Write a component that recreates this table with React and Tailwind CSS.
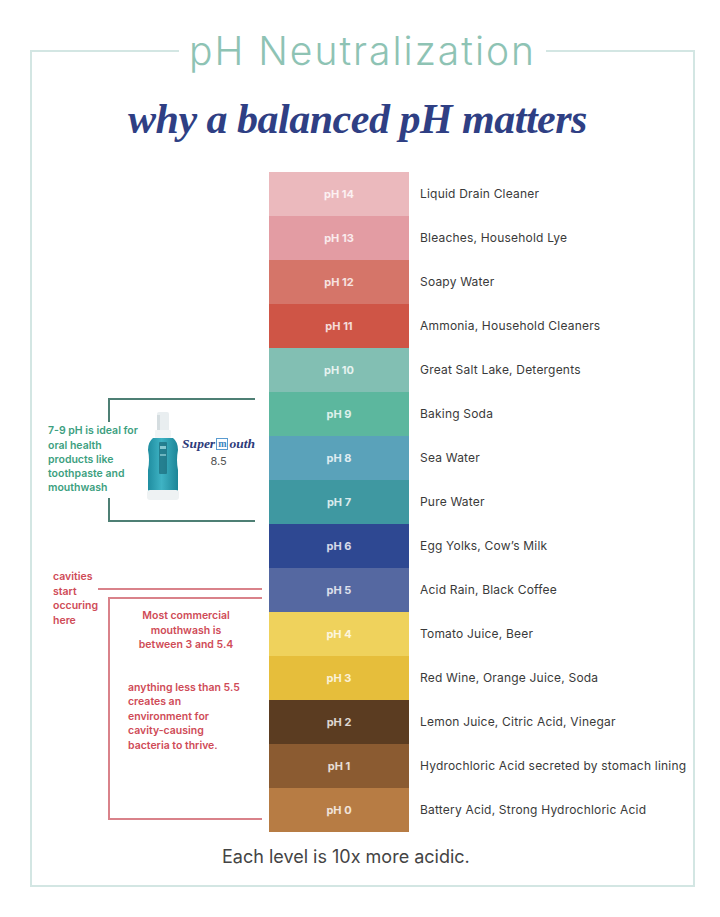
import React from 'react';

const levels = [
  { ph: 14, bg: 'bg-[#ebb9bd]', label: 'Liquid Drain Cleaner' },
  { ph: 13, bg: 'bg-[#e39ca3]', label: 'Bleaches, Household Lye' },
  { ph: 12, bg: 'bg-[#d57569]', label: 'Soapy Water' },
  { ph: 11, bg: 'bg-[#cf5546]', label: 'Ammonia, Household Cleaners' },
  { ph: 10, bg: 'bg-[#82bfb3]', label: 'Great Salt Lake, Detergents' },
  { ph: 9, bg: 'bg-[#5cb79e]', label: 'Baking Soda' },
  { ph: 8, bg: 'bg-[#5aa2ba]', label: 'Sea Water' },
  { ph: 7, bg: 'bg-[#3f98a1]', label: 'Pure Water' },
  { ph: 6, bg: 'bg-[#2e4892]', label: 'Egg Yolks, Cow’s Milk' },
  { ph: 5, bg: 'bg-[#5568a1]', label: 'Acid Rain, Black Coffee' },
  { ph: 4, bg: 'bg-[#efd25c]', label: 'Tomato Juice, Beer' },
  { ph: 3, bg: 'bg-[#e6be3b]', label: 'Red Wine, Orange Juice, Soda' },
  { ph: 2, bg: 'bg-[#5b3c21]', label: 'Lemon Juice, Citric Acid, Vinegar' },
  { ph: 1, bg: 'bg-[#8b5b31]', label: 'Hydrochloric Acid secreted by stomach lining' },
  { ph: 0, bg: 'bg-[#b77c44]', label: 'Battery Acid, Strong Hydrochloric Acid' },
];

const Bottle = () => (
  <svg width="36" height="88" viewBox="0 0 36 88" className="shrink-0">
    <defs>
      <linearGradient id="body" x1="0" x2="1" y1="0" y2="0">
        <stop offset="0" stopColor="#1f8da0" />
        <stop offset="0.45" stopColor="#3fb3c4" />
        <stop offset="1" stopColor="#1c8597" />
      </linearGradient>
    </defs>
    <rect x="12" y="0" width="12" height="20" rx="2" fill="#e9eef0" />
    <rect x="12" y="3" width="3" height="16" fill="#d5dde0" />
    <rect x="10" y="18" width="16" height="8" rx="1" fill="#f2f5f6" />
    <path d="M8 26 Q3 30 3 38 Q5 48 3 58 L3 78 Q3 82 7 82 L29 82 Q33 82 33 78 L33 58 Q31 48 33 38 Q33 30 28 26 Z" fill="url(#body)" />
    <rect x="14" y="30" width="8" height="32" rx="1" fill="#1b6b7a" opacity="0.7" />
    <rect x="15" y="34" width="6" height="3" fill="#9fd9e0" opacity="0.8" />
    <rect x="15" y="42" width="6" height="2" fill="#9fd9e0" opacity="0.6" />
    <rect x="2" y="78" width="32" height="10" rx="3" fill="#eef2f3" />
  </svg>
);

const App = () => {
  return (
    <div className="w-[720px] h-[917px] bg-white overflow-hidden font-['Inter',sans-serif]">
      <fieldset className="ml-[30px] mr-[25px] mt-[31px] border-2 border-[#d3e6e3] pb-[16px]">
        <legend className="mx-auto px-[10px] text-[39px] leading-none font-light text-[#8ec3b4] tracking-[2px]">
          pH Neutralization
        </legend>

        <h2 className="mt-[28px] text-center text-[42px] leading-none italic font-bold text-[#2f3f84] font-['Liberation_Serif',serif] tracking-[-0.5px] pr-[10px]">
          why a balanced pH matters
        </h2>

        <div className="mt-[32px] flex">
          {/* left annotations */}
          <div className="w-[237px] shrink-0">
            {/* ideal range bracket */}
            <div className="mt-[226px] ml-[76px] mr-[14px] h-[124px] border-y-2 border-[#4e7f74] flex flex-col justify-between">
              <div className="w-[2px] h-[22px] bg-[#4e7f74]" />
              <div className="h-[76px] -ml-[60px] flex items-center">
                <p className="w-[104px] text-[10.5px] leading-[14.25px] font-semibold text-[#3d9f7f] whitespace-nowrap">
                  7-9 pH is ideal for
                  <br />
                  oral health
                  <br />
                  products like
                  <br />
                  toothpaste and
                  <br />
                  mouthwash
                </p>
                <div className="ml-[5px] mb-[8px]">
                  <Bottle />
                </div>
                <div className="ml-[1px] mb-[16px] flex flex-col items-center">
                  <span className="font-['Liberation_Serif',serif] italic font-bold text-[13.5px] leading-none text-[#2d3a7a] whitespace-nowrap">
                    Super
                    <span className="inline-block not-italic border border-[#5a9bd0] text-[#3d86c0] text-[10px] leading-[10px] px-[1px] mx-[1px] align-[1px]">m</span>
                    outh
                  </span>
                  <span className="mt-[6px] text-[11px] leading-none text-[#555]">8.5</span>
                </div>
              </div>
              <div className="w-[2px] h-[22px] bg-[#4e7f74]" />
            </div>

            {/* cavity zone */}
            <div className="mt-[48px] flex">
              <p className="ml-[21px] w-[45px] text-[10.5px] leading-[14.5px] font-semibold text-[#cf4b57]">
                cavities start occuring here
              </p>
              <div className="flex-1 mr-[7px]">
                <div className="mt-[18px] h-[2px] bg-[#d9828a]" />
                <div className="mt-[7px] ml-[10px] h-[223px] border-y-2 border-l-2 border-[#d9828a]">
                  <p className="pt-[10px] text-center text-[10.5px] leading-[14.5px] font-semibold text-[#cf4b57]">
                    Most commercial
                    <br />
                    mouthwash is
                    <br />
                    between 3 and 5.4
                  </p>
                  <p className="mt-[28px] pl-[18px] text-[10.5px] leading-[14.5px] font-semibold text-[#cf4b57] whitespace-nowrap">
                    anything less than 5.5
                    <br />
                    creates an
                    <br />
                    environment for
                    <br />
                    cavity-causing
                    <br />
                    bacteria to thrive.
                  </p>
                </div>
              </div>
            </div>
          </div>

          {/* pH scale */}
          <div className="w-[140px] shrink-0 flex flex-col">
            {levels.map((lvl) => (
              <div key={lvl.ph} className={`h-[44px] flex items-center justify-center ${lvl.bg}`}>
                <span className="text-[11px] font-bold text-white/80">pH {lvl.ph}</span>
              </div>
            ))}
          </div>

          {/* examples */}
          <div className="pl-[11px] flex flex-col">
            {levels.map((lvl) => (
              <div key={lvl.ph} className="h-[44px] flex items-center">
                <span className="text-[12px] tracking-[0.2px] text-[#3a3a3a] whitespace-nowrap">{lvl.label}</span>
              </div>
            ))}
          </div>
        </div>

        <p className="mt-[13px] pl-[190px] text-[18px] leading-[24px] text-[#444]">
          Each level is 10x more acidic.
        </p>
      </fieldset>
    </div>
  );
};

export default App;
